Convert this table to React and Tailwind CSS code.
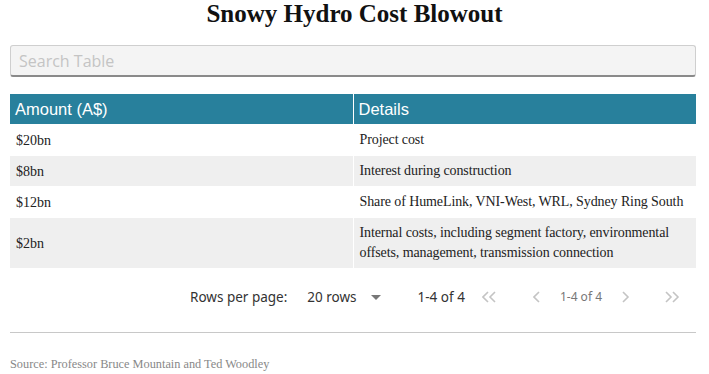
import React from "react";

const rows = [
  { amount: "$20bn", details: "Project cost" },
  { amount: "$8bn", details: "Interest during construction" },
  { amount: "$12bn", details: "Share of HumeLink, VNI-West, WRL, Sydney Ring South" },
  {
    amount: "$2bn",
    details: "Internal costs, including segment factory, environmental offsets, management, transmission connection",
  },
];

const serif = { fontFamily: '"Liberation Serif", serif' };

function Chevron({ double, right }) {
  const pts = right ? "1,1 6,6 1,11" : "6,1 1,6 6,11";
  return (
    <svg width={double ? 16 : 8} height="12" viewBox={double ? "0 0 16 12" : "0 0 8 12"} fill="none" stroke="#c4c4c4" strokeWidth="1.6">
      <polyline points={pts} />
      {double && <polyline points={pts} transform="translate(7 0)" />}
    </svg>
  );
}

export default function App() {
  return (
    <div className="w-[709px] h-[374px] bg-white px-[10px] overflow-hidden">
      <h1
        className="text-center text-[25px] font-bold leading-[26px] pt-[1px] text-[#111]"
        style={serif}
      >
        Snowy Hydro Cost Blowout
      </h1>

      <div className="mt-[18px] h-[32px] w-[686px] rounded-[3px] border border-[#cfcfcf] border-b-[#8a8a8a] border-b-2 bg-[#f4f4f4] flex items-center px-[8px]">
        <span className="text-[16px] text-[#c4c4c4] font-['Open_Sans',sans-serif]">Search Table</span>
      </div>

      <table className="mt-[17px] w-[686px] table-fixed border-collapse">
        <thead>
          <tr className="h-[30px] bg-[#28809c] text-white text-[16.5px] font-['Liberation_Sans',sans-serif]">
            <th className="w-1/2 text-left font-normal px-[5px] border-r border-white">Amount (A$)</th>
            <th className="w-1/2 text-left font-normal px-[5px]">Details</th>
          </tr>
        </thead>
        <tbody className="text-[14px] text-[#222]" style={serif}>
          {rows.map((r, i) => (
            <tr key={i} className={i % 2 === 1 ? "bg-[#efefef]" : "bg-white"}>
              <td className={`px-[6px] border-r border-white ${i === 3 ? "h-[50px]" : i === 1 ? "h-[30px]" : "h-[32px]"}`}>
                {r.amount}
              </td>
              <td className="px-[6px] leading-[20px] tracking-[-0.1px]">{r.details}</td>
            </tr>
          ))}
        </tbody>
      </table>

      <div className="mt-[16px] h-[26px] flex items-center text-[13.5px] text-[#333] font-['Noto_Sans',sans-serif]">
        <span className="ml-[180px]">Rows per page:</span>
        <span className="ml-[20px]">20 rows</span>
        <svg width="10" height="5" viewBox="0 0 10 5" className="ml-[14px]">
          <path d="M0 0 L10 0 L5 5 Z" fill="#777" />
        </svg>
        <span className="ml-[37px]">1-4 of 4</span>
        <span className="ml-[17px]"><Chevron double /></span>
        <span className="ml-[35px]"><Chevron /></span>
        <span className="ml-[19px] text-[12px] text-[#777]">1-4 of 4</span>
        <span className="ml-[20px]"><Chevron right /></span>
        <span className="ml-[35px]"><Chevron double right /></span>
      </div>

      <div className="mt-[22px] h-px w-[686px] bg-[#c8c8c8]" />

      <p className="mt-[22px] text-[12.3px] text-[#888]" style={serif}>
        Source: Professor Bruce Mountain and Ted Woodley
      </p>
    </div>
  );
}
